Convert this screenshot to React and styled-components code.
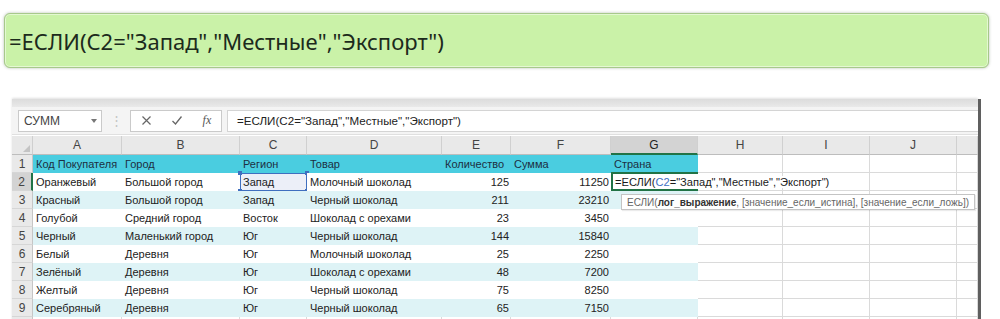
import React from 'react'
import styled, { createGlobalStyle } from 'styled-components'

const GlobalStyle = createGlobalStyle`
  html, body {
    margin: 0;
    padding: 0;
    background: #ffffff;
    overflow: hidden;
  }
`

const Page = styled.div`
  width: 1000px;
  height: 319px;
  display: flex;
  flex-direction: column;
  padding-top: 13px;
  box-sizing: border-box;
  overflow: hidden;

  & > * {
    flex-shrink: 0;
  }
`

const Banner = styled.div`
  margin-left: 4px;
  width: 985px;
  height: 55px;
  box-sizing: border-box;
  display: flex;
  align-items: center;
  padding-left: 4px;
  background: #caf2a8;
  border: 1px solid #a7c98b;
  border-radius: 6px;
  box-shadow: 0 0 3px rgba(90, 110, 80, 0.45), inset 0 0 0 1px #e4f8d2;
`

const BannerText = styled.span`
  font-family: 'Noto Sans', 'DejaVu Sans', sans-serif;
  font-size: 22px;
  color: #1c2a1c;
  white-space: nowrap;
`

const Window = styled.div`
  margin-top: 31px;
  margin-left: 12px;
  width: 966px;
  display: flex;
  flex-direction: column;
  background: #ffffff;
  box-shadow: 3px 0 0 #5f5f5f, 0 -1px 2px rgba(0, 0, 0, 0.12);
  font-family: 'Liberation Sans', Arial, sans-serif;
`

const TopStrip = styled.div`
  height: 8px;
  background: linear-gradient(#dcdcdc, #e9e9e9);
`

const FormulaBar = styled.div`
  height: 28px;
  display: flex;
  align-items: center;
  padding-left: 6px;
  background: #f4f4f4;
  border-bottom: 1px solid #e0e0e0;
  box-sizing: border-box;
`

const NameBox = styled.div`
  width: 84px;
  height: 22px;
  box-sizing: border-box;
  display: flex;
  align-items: center;
  justify-content: space-between;
  padding: 0 4px 0 5px;
  background: #ffffff;
  border: 1px solid #cacaca;
  font-size: 12px;
  color: #444;
`

const Caret = styled.span`
  width: 0;
  height: 0;
  border-left: 3px solid transparent;
  border-right: 3px solid transparent;
  border-top: 4px solid #777;
`

const Dots = styled.span`
  width: 28px;
  text-align: center;
  color: #c4c4c4;
  font-size: 13px;
`

const ButtonBox = styled.div`
  width: 92px;
  height: 22px;
  box-sizing: border-box;
  display: flex;
  align-items: center;
  justify-content: space-around;
  background: #ffffff;
  border: 1px solid #cacaca;
  color: #666;
`

const Fx = styled.span`
  font-family: 'Liberation Serif', serif;
  font-style: italic;
  font-size: 12px;
  color: #555;
`

const FormulaInput = styled.div`
  flex: 1;
  height: 22px;
  margin-left: 5px;
  box-sizing: border-box;
  display: flex;
  align-items: center;
  padding-left: 9px;
  background: #ffffff;
  border: 1px solid #d4d4d4;
  border-right: none;
  font-size: 11.6px;
  color: #222;
  white-space: nowrap;
`

const Sheet = styled.div`
  margin-top: 1px;
  display: grid;
  grid-template-columns: 21px 89px 118px 67px 135px 69px 100px 87px 85px 87px 87px 21px;
  grid-auto-rows: 18px;
  grid-template-rows: 19px;
  font-size: 11px;
  color: #222;
`

const Corner = styled.div`
  position: relative;
  background: #e8e8e8;
  border-right: 1px solid #cfcfcf;
  border-bottom: 1px solid #bdbdbd;

  &::after {
    content: '';
    position: absolute;
    right: 2px;
    bottom: 2px;
    border-left: 7px solid transparent;
    border-bottom: 7px solid #c4c4c4;
  }
`

const ColHead = styled.div`
  display: flex;
  align-items: center;
  justify-content: center;
  font-size: 12px;
  color: ${p => (p.$active ? '#222' : '#444')};
  background: ${p => (p.$active ? '#d3d3d3' : '#e9e9e9')};
  border-right: 1px solid #d0d0d0;
  border-bottom: ${p => (p.$active ? '2px solid #217346' : '1px solid #bdbdbd')};
  box-sizing: border-box;
`

const RowHead = styled.div`
  display: flex;
  align-items: center;
  justify-content: center;
  font-size: 12px;
  color: #444;
  background: ${p => (p.$active ? '#d3d3d3' : '#e9e9e9')};
  border-right: ${p => (p.$active ? '2px solid #217346' : '1px solid #c6c6c6')};
  border-bottom: 1px solid #d6d6d6;
  box-sizing: border-box;
`

const bandColor = {
  head: '#4acde0',
  odd: '#def3f6',
  even: '#ffffff',
}

const Cell = styled.div`
  position: relative;
  display: flex;
  align-items: center;
  justify-content: ${p => (p.$right ? 'flex-end' : 'flex-start')};
  padding: 0 ${p => (p.$right ? '2px' : '0')} 0 ${p => (p.$right ? '0' : '3px')};
  background: ${p => bandColor[p.$band]};
  color: ${p => (p.$band === 'head' ? '#1d2f42' : '#222')};
  white-space: nowrap;
  overflow: visible;
  box-sizing: border-box;
`

const GridCell = styled.div`
  background: #ffffff;
  border-right: 1px solid #dadada;
  border-bottom: 1px solid #dadada;
  box-sizing: border-box;
`

const RefCell = styled(Cell)`
  background: #eceff8;
  border: 1px solid #3f6fbf;
  padding-left: 2px;
`

const Handle = styled.span`
  position: absolute;
  width: 4px;
  height: 4px;
  background: #3f6fbf;
  ${p => (p.$top ? 'top: -3px;' : 'bottom: -3px;')}
  ${p => (p.$left ? 'left: -3px;' : 'right: -3px;')}
`

const EditCell = styled.div`
  position: relative;
  z-index: 2;
  display: flex;
  align-items: center;
  border: 2px solid #217346;
  border-right: none;
  margin-top: -1px;
  background: #ffffff;
  box-sizing: border-box;
`

const EditText = styled.span`
  padding-left: 2px;
  padding-right: 4px;
  background: #ffffff;
  font-size: 11.1px;
  color: #1a1a1a;
  white-space: nowrap;
`

const Ref = styled.span`
  color: #3e6fc3;
`

const Tooltip = styled.div`
  position: absolute;
  left: 8px;
  top: 20px;
  height: 14px;
  display: flex;
  align-items: center;
  padding: 0 5px 0 5px;
  background: #ffffff;
  border: 1px solid #c4c4c4;
  box-shadow: 1px 1px 1px rgba(0, 0, 0, 0.08);
  font-size: 10px;
  color: #666;
  white-space: nowrap;
`

const Bold = styled.b`
  color: #333;
`

const letters = ['A', 'B', 'C', 'D', 'E', 'F', 'G', 'H', 'I', 'J', '']

const rows = [
  ['Код Покупателя', 'Город', 'Регион', 'Товар', 'Количество', 'Сумма', 'Страна'],
  ['Оранжевый', 'Большой город', 'Запад', 'Молочный шоколад', '125', '11250', ''],
  ['Красный', 'Большой город', 'Запад', 'Черный шоколад', '211', '23210', ''],
  ['Голубой', 'Средний город', 'Восток', 'Шоколад с орехами', '23', '3450', ''],
  ['Черный', 'Маленький город', 'Юг', 'Черный шоколад', '144', '15840', ''],
  ['Белый', 'Деревня', 'Юг', 'Молочный шоколад', '25', '2250', ''],
  ['Зелёный', 'Деревня', 'Юг', 'Шоколад с орехами', '48', '7200', ''],
  ['Желтый', 'Деревня', 'Юг', 'Черный шоколад', '75', '8250', ''],
  ['Серебряный', 'Деревня', 'Юг', 'Черный шоколад', '65', '7150', ''],
  ['', '', '', '', '', '', ''],
]

const XIcon = () => (
  <svg width="11" height="11" viewBox="0 0 11 11">
    <path d="M1.5 1.5 L9.5 9.5 M9.5 1.5 L1.5 9.5" stroke="#666" strokeWidth="1.2" fill="none" />
  </svg>
)

const CheckIcon = () => (
  <svg width="12" height="11" viewBox="0 0 12 11">
    <path d="M1.5 6 L4.5 9 L10.5 1.5" stroke="#666" strokeWidth="1.3" fill="none" />
  </svg>
)

function Formula({ colored }) {
  return (
    <>
      =ЕСЛИ({colored ? <Ref>С2</Ref> : 'С2'}="Запад","Местные","Экспорт")
    </>
  )
}

// the last row only peeks in at the bottom edge, so its number stays hidden
function SheetRow({ cells, index }) {
  const num = index + 1
  const peek = num === rows.length
  const band = index === 0 ? 'head' : index % 2 === 1 ? 'even' : 'odd'
  return (
    <>
      <RowHead $active={num === 2}>{peek ? '' : num}</RowHead>
      {cells.map((text, col) => {
        const right = index > 0 && (col === 4 || col === 5)
        if (num === 2 && col === 2) {
          return (
            <RefCell key={col} $band={band}>
              {text}
              <Handle $top $left />
              <Handle $top />
              <Handle $left />
              <Handle />
            </RefCell>
          )
        }
        if (num === 2 && col === 6) {
          return (
            <EditCell key={col}>
              <EditText>
                <Formula colored />
              </EditText>
              <Tooltip>
                ЕСЛИ(<Bold>лог_выражение</Bold>, [значение_если_истина], [значение_если_ложь])
              </Tooltip>
            </EditCell>
          )
        }
        if (peek) return <GridCell key={col} />
        return (
          <Cell key={col} $band={band} $right={right}>
            {text}
          </Cell>
        )
      })}
      {[0, 1, 2, 3].map(k => (
        <GridCell key={'g' + k} />
      ))}
    </>
  )
}

export default function App() {
  return (
    <Page>
      <GlobalStyle />
      <Banner>
        <BannerText>
          <Formula />
        </BannerText>
      </Banner>
      <Window>
        <TopStrip />
        <FormulaBar>
          <NameBox>
            СУММ
            <Caret />
          </NameBox>
          <Dots>⋮</Dots>
          <ButtonBox>
            <XIcon />
            <CheckIcon />
            <Fx>fx</Fx>
          </ButtonBox>
          <FormulaInput>
            <Formula />
          </FormulaInput>
        </FormulaBar>
        <Sheet>
          <Corner />
          {letters.map((l, i) => (
            <ColHead key={i} $active={l === 'G'}>
              {l}
            </ColHead>
          ))}
          {rows.map((r, i) => (
            <SheetRow key={i} cells={r} index={i} />
          ))}
        </Sheet>
      </Window>
    </Page>
  )
}
